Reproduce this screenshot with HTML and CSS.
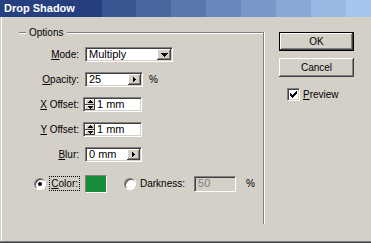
FILE: index.html
```html
<!DOCTYPE html>
<html>
<head>
<meta charset="utf-8">
<link rel="stylesheet" href="styles.css">
</head>
<body>
<div class="window">
  <div class="titlebar">Drop Shadow</div>
  <div class="body">
    <div class="group">
      <div class="legend"><span class="dash"></span><span class="legend-text">Options</span><span class="rule"></span></div>
      <div class="rows">
        <div class="row">
          <span class="lbl"><u>M</u>ode:</span>
          <div class="field w-mode"><span class="val">Multiply</span>
            <span class="abtn drop"><svg width="7" height="4" viewBox="0 0 7 4" shape-rendering="crispEdges"><path d="M0 0h7v1h-1v1h-1v1h-1v1h-1v-1h-1v-1h-1v-1h-1z"/></svg></span>
          </div>
        </div>
        <div class="row">
          <span class="lbl"><u>O</u>pacity:</span>
          <div class="ctl"><div class="field w-op"><span class="val">25</span>
            <span class="abtn side-arrow"><svg width="3" height="5" viewBox="0 0 3 5" shape-rendering="crispEdges"><path d="M0 0h1v1h1v1h1v1h-1v1h-1v1h-1z"/></svg></span>
          </div><span class="unit">%</span></div>
        </div>
        <div class="row">
          <span class="lbl"><u>X</u> Offset:</span>
          <div class="field w-off">
            <span class="spin"><span class="half"><svg width="5" height="3" viewBox="0 0 5 3" shape-rendering="crispEdges"><path d="M2 0h1v1h1v1h1v1h-5v-1h1v-1h1z"/></svg></span><span class="half"><svg width="5" height="3" viewBox="0 0 5 3" shape-rendering="crispEdges"><path d="M0 0h5v1h-1v1h-1v1h-1v-1h-1v-1h-1z"/></svg></span></span>
            <span class="val">1 mm</span>
          </div>
        </div>
        <div class="row">
          <span class="lbl"><u>Y</u> Offset:</span>
          <div class="field w-off">
            <span class="spin"><span class="half"><svg width="5" height="3" viewBox="0 0 5 3" shape-rendering="crispEdges"><path d="M2 0h1v1h1v1h1v1h-5v-1h1v-1h1z"/></svg></span><span class="half"><svg width="5" height="3" viewBox="0 0 5 3" shape-rendering="crispEdges"><path d="M0 0h5v1h-1v1h-1v1h-1v-1h-1v-1h-1z"/></svg></span></span>
            <span class="val">1 mm</span>
          </div>
        </div>
        <div class="row">
          <span class="lbl"><u>B</u>lur:</span>
          <div class="field w-blur"><span class="val">0 mm</span>
            <span class="abtn side-arrow"><svg width="3" height="5" viewBox="0 0 3 5" shape-rendering="crispEdges"><path d="M0 0h1v1h1v1h1v1h-1v1h-1v1h-1z"/></svg></span>
          </div>
        </div>
        <div class="row color-row">
          <span class="lbl radio-lbl"><span class="radio on"></span><span class="focus"><u>C</u>olor:</span></span>
          <div class="ctl">
            <span class="swatch"></span>
            <span class="radio dark-radio"></span>
            <span class="dark-text">Darkness:</span>
            <div class="field disabled w-dark"><span class="val">50</span></div>
            <span class="unit2">%</span>
          </div>
        </div>
      </div>
    </div>
    <div class="side">
      <div class="button default">OK</div>
      <div class="button cancel">Cancel</div>
      <div class="check-row"><span class="check"><svg width="7" height="7" viewBox="0 0 7 7" shape-rendering="crispEdges"><path d="M0 2h1v1h1v1h1v-1h1v-1h1v-1h1v-1h1v3h-1v1h-1v1h-1v1h-1v1h-1v-1h-1v-1h-1z"/></svg></span><span class="check-text"><u>P</u>review</span></div>
    </div>
  </div>
</div>
</body>
</html>
```

FILE: styles.css
```css
html, body {
  margin: 0;
  padding: 0;
}
body {
  width: 371px;
  height: 243px;
  overflow: hidden;
  font-family: "Liberation Sans", Arial, sans-serif;
  font-size: 10px;
  color: #000;
}
.window {
  width: 371px;
  height: 243px;
  background: #d4d0c8;
  box-sizing: border-box;
  display: flex;
  flex-direction: column;
  box-shadow: inset 0 -1px 0 #404040, inset 0 -2px 0 #808080;
}
.titlebar {
  height: 17px;
  line-height: 17px;
  padding-left: 4px;
  color: #fff;
  font-weight: bold;
  font-size: 11px;
  background: linear-gradient(to right,
    #253f80 0, #253f80 102px,
    #3b5793 102px, #3b5793 136px,
    #4a669f 136px, #4a669f 171px,
    #5877ad 171px, #5877ad 206px,
    #6787bb 206px, #6787bb 241px,
    #7898c8 241px, #7898c8 276px,
    #88a8d5 276px, #88a8d5 311px,
    #98b9e2 311px, #98b9e2 346px,
    #a3c5ee 346px, #a3c5ee 371px);
}
.body {
  flex: 1;
  display: flex;
  align-items: flex-start;
  box-shadow: inset 1px 0 0 #d4d0c8, inset 2px 0 0 #fff;
  margin-bottom: 2px;
}
.group {
  margin-left: 19px;
  margin-top: 15px;
  width: 244px;
  height: 192px;
  border-right: 1px solid #808080;
  box-shadow: 1px 0 0 #fff;
}
.legend {
  display: flex;
  align-items: center;
  height: 13px;
  margin-top: -6px;
}
.dash, .rule {
  height: 0;
  border-top: 1px solid #808080;
  border-bottom: 1px solid #fff;
}
.dash { width: 7px; }
.rule { flex: 1; }
.legend-text {
  padding: 0 4px 0 3px;
}
.rows {
  padding-top: 3px;
}
.row {
  display: grid;
  grid-template-columns: 60px auto;
  column-gap: 6px;
  align-items: center;
  height: 25px;
}
.lbl {
  text-align: right;
  white-space: nowrap;
}
.ctl {
  display: flex;
  align-items: center;
}
.field {
  display: flex;
  align-items: center;
  height: 15px;
  box-sizing: border-box;
  background: #fff;
  border-top: 1px solid #808080;
  border-left: 1px solid #808080;
  border-bottom: 1px solid #fff;
  border-right: 1px solid #fff;
  box-shadow: inset 1px 1px 0 #404040, inset -1px -1px 0 #d4d0c8;
  padding: 1px;
}
.val {
  flex: 1;
  padding-left: 2px;
  font-size: 11px;
  line-height: 11px;
  white-space: nowrap;
}
.w-mode { width: 88px; }
.w-op { width: 58px; }
.w-blur { width: 57px; }
.w-off { width: 59px; margin-left: -2px; }
.w-dark { width: 42px; height: 16px; }
.abtn {
  width: 14px;
  height: 11px;
  background: #d4d0c8;
  box-shadow: inset -1px -1px 0 #404040, inset 1px 1px 0 #fff, inset -2px -2px 0 #808080;
  display: flex;
  align-items: center;
  justify-content: center;
}
.abtn.side-arrow { width: 13px; }
.abtn svg, .half svg { display: block; fill: #000; }
.unit {
  margin-left: 6px;
}
.spin {
  display: flex;
  flex-direction: column;
  width: 10px;
  height: 11px;
}
.half {
  flex: 1;
  background: #d4d0c8;
  box-shadow: inset -1px -1px 0 #404040, inset 1px 1px 0 #fff;
  display: flex;
  align-items: center;
  justify-content: center;
}
.color-row {
  margin-top: 4px;
}
.radio-lbl {
  display: flex;
  justify-content: flex-end;
  align-items: center;
  margin-left: -43px;
}
.radio {
  width: 12px;
  height: 12px;
  box-sizing: border-box;
  border-radius: 50%;
  background: #fff;
  border: 1px solid;
  border-color: #808080 #fff #fff #808080;
  box-shadow: inset 1px 1px 0 #404040;
  display: inline-flex;
  align-items: center;
  justify-content: center;
  flex: none;
}
.radio.on::after {
  content: "";
  width: 4px;
  height: 4px;
  border-radius: 50%;
  background: #000;
}
.focus {
  margin-left: 1px;
  padding: 1px 1px;
  border: 1px dotted #000;
  margin-right: -1px;
}
.radio-lbl .radio { margin-right: 2px; }
.swatch {
  width: 22px;
  height: 18px;
  box-sizing: border-box;
  background: #178d3b;
  border: 1px solid;
  border-color: #808080 #fff #fff #808080;
}
.dark-radio { margin-left: 17px; }
.dark-text {
  margin-left: 4px;
  margin-right: 9px;
}
.disabled {
  background: #d4d0c8;
  color: #808080;
}
.unit2 {
  margin-left: 10px;
}
.side {
  margin-left: 15px;
  margin-top: 15px;
  display: flex;
  flex-direction: column;
}
.button {
  width: 75px;
  height: 19px;
  box-sizing: border-box;
  display: flex;
  align-items: center;
  justify-content: center;
  background: #d4d0c8;
  box-shadow: inset -1px -1px 0 #404040, inset 1px 1px 0 #fff, inset -2px -2px 0 #808080;
}
.button.default {
  border: 1px solid #000;
}
.cancel {
  margin-top: 7px;
}
.check-row {
  display: flex;
  align-items: center;
  margin-top: 11px;
  margin-left: 8px;
}
.check {
  width: 13px;
  height: 13px;
  box-sizing: border-box;
  background: #fff;
  border: 1px solid;
  border-color: #808080 #fff #fff #808080;
  box-shadow: inset 1px 1px 0 #404040, inset -1px -1px 0 #d4d0c8;
  display: flex;
  align-items: center;
  justify-content: center;
}
.check svg { display: block; fill: #000; }
.check-text {
  margin-left: 3px;
}
```
